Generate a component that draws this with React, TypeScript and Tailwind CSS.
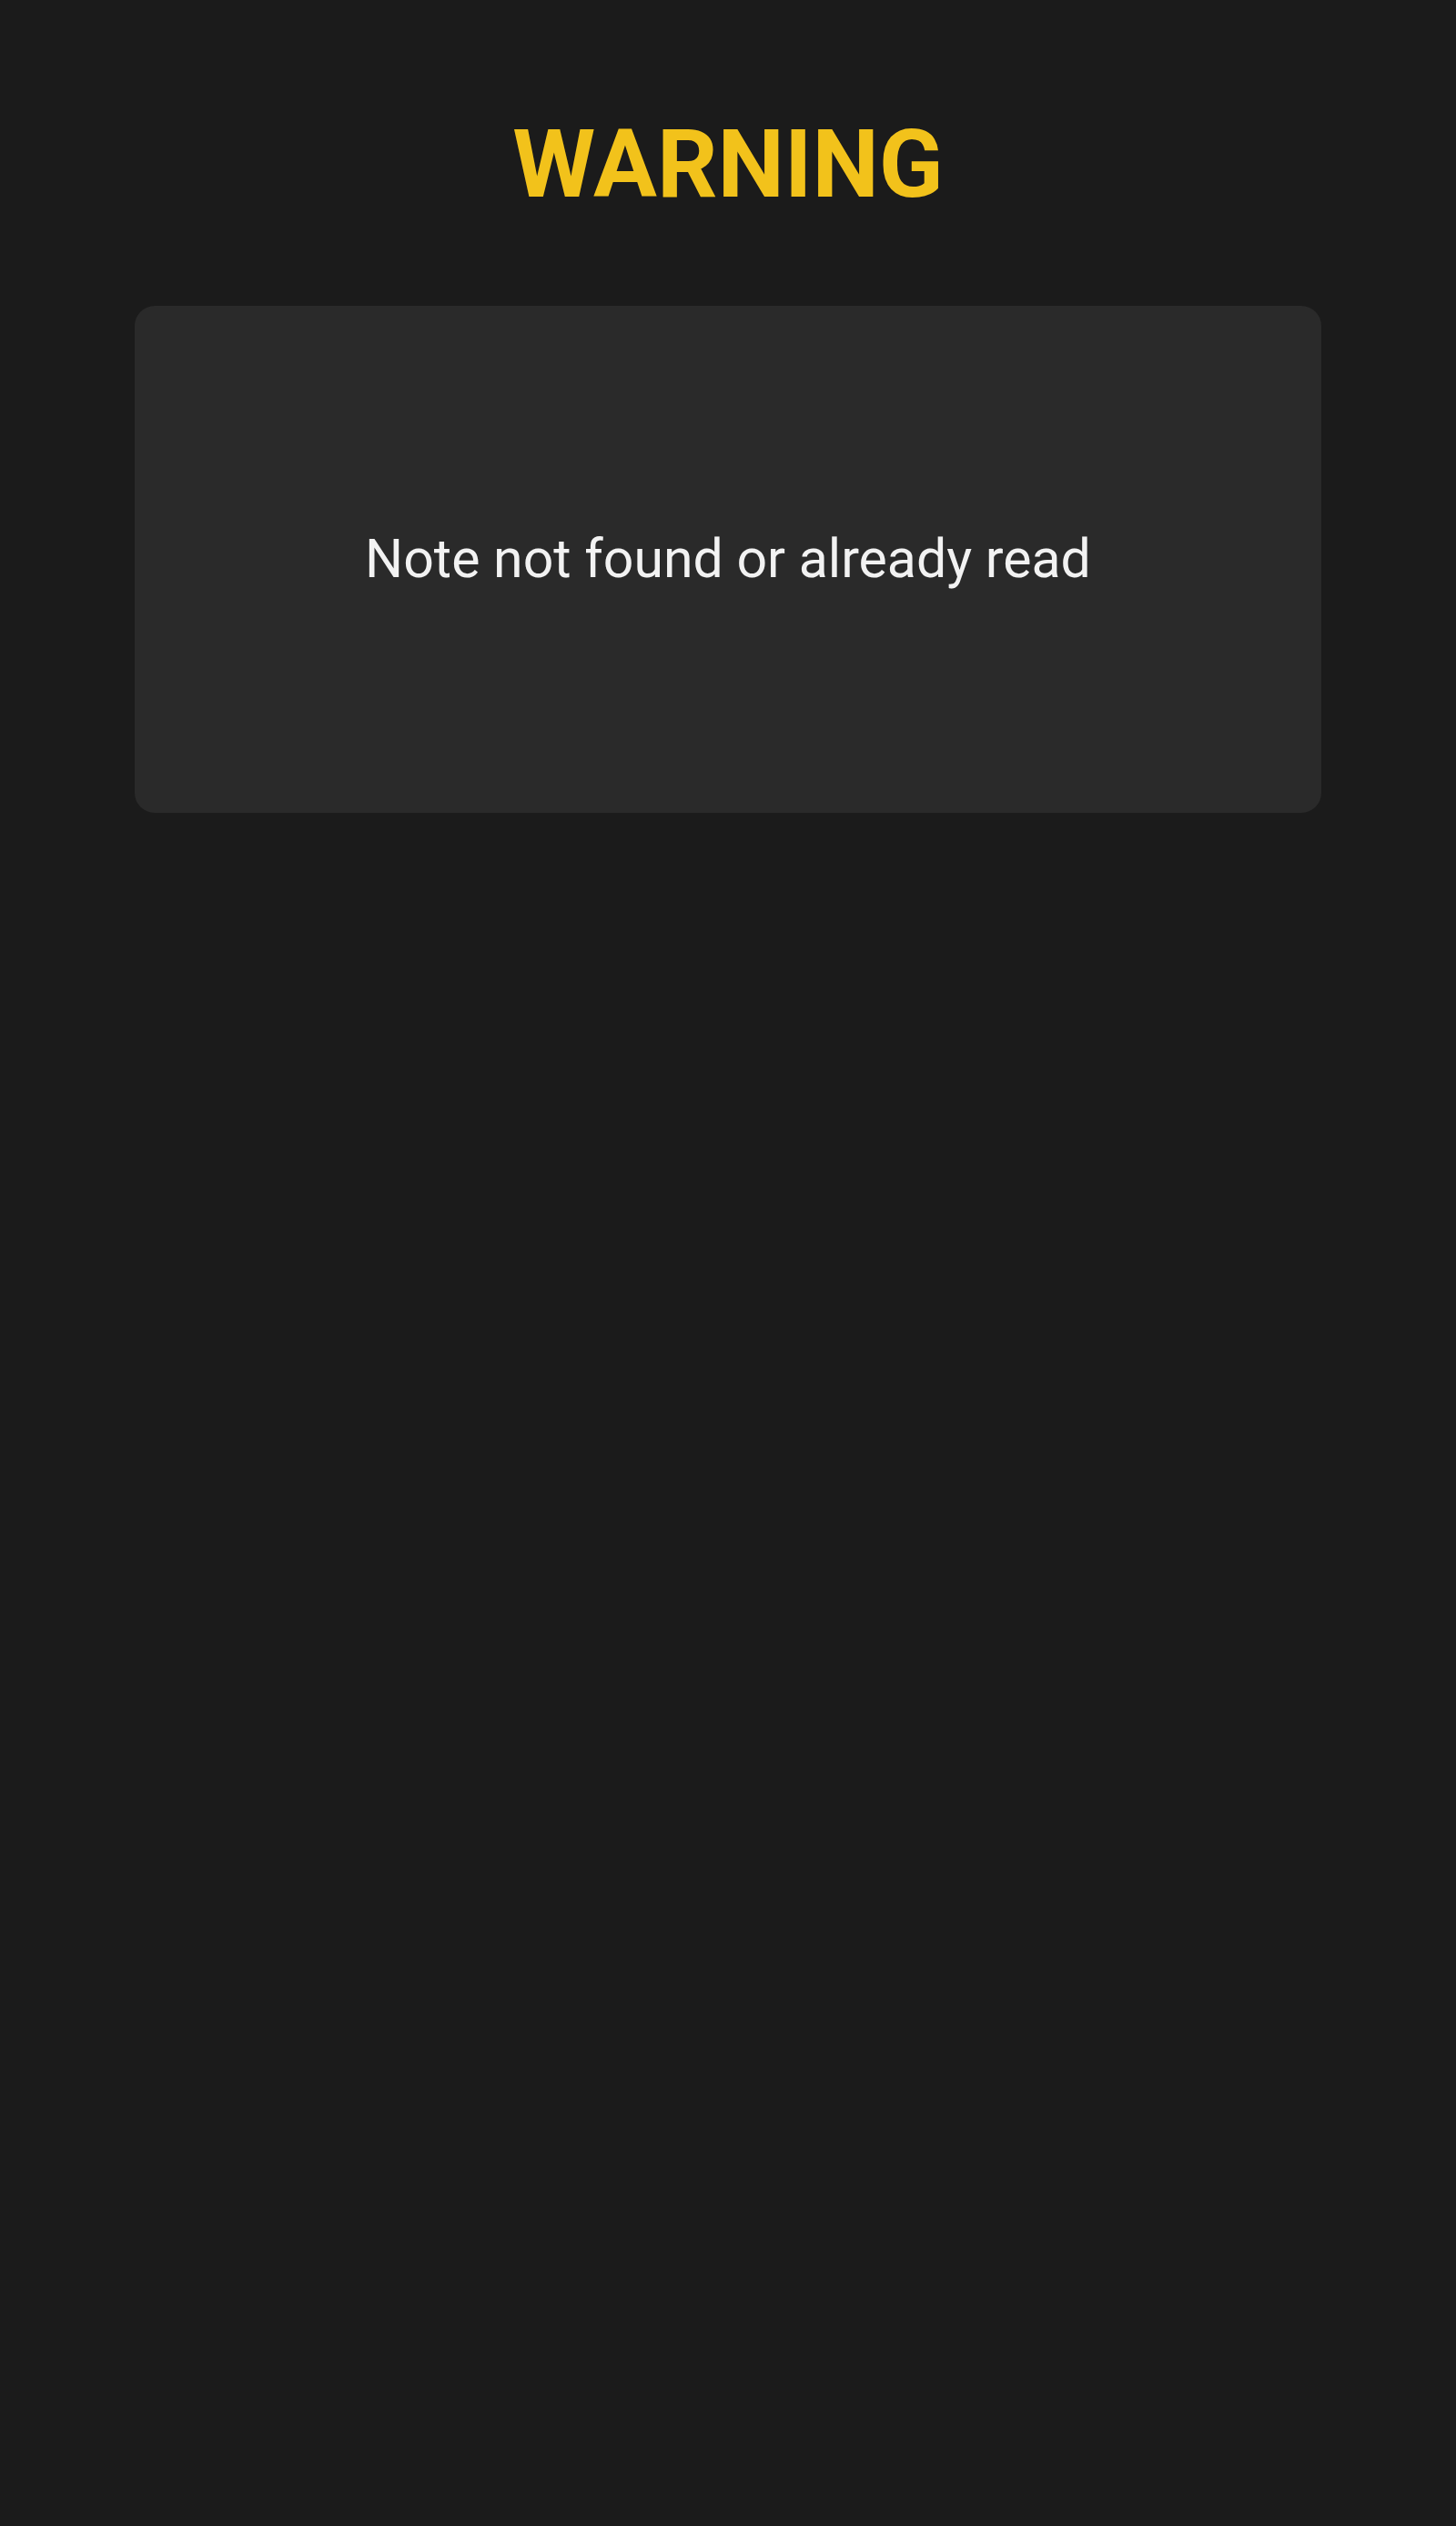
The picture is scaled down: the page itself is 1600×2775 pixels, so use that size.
export default function App() {
  return (
    <div className="min-h-[2775px] bg-[#1b1b1b] font-['Roboto',sans-serif]">
      <div className="pt-[118px] flex flex-col items-center">
        <h1 className="text-[104px] leading-[125px] font-bold text-[#f2c21b]">
          WARNING
        </h1>
        <div className="mt-[93px] w-[1304px] h-[557px] rounded-[22px] bg-[#2a2a2a] flex items-center justify-center">
          <p className="text-[59px] text-[#f2f2f2]">Note not found or already read</p>
        </div>
      </div>
    </div>
  );
}
